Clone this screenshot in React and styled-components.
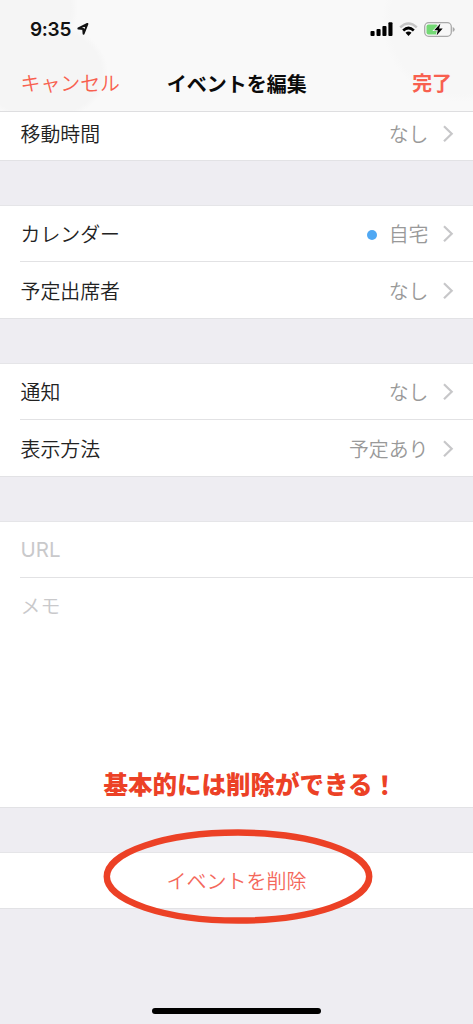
import React from 'react';
import styled, { createGlobalStyle } from 'styled-components';

const Global = createGlobalStyle`
  * { box-sizing: border-box; }
  body { margin: 0; background: #eeedf2; }
`;

const Screen = styled.main`
  position: relative;
  width: 473px;
  height: 1024px;
  overflow: hidden;
  display: flex;
  flex-direction: column;
  background: #eeedf2;
  color: #222;
  font-family: Inter, 'Noto Sans CJK JP', sans-serif;
  font-size: 19.9px;
  font-weight: 350;
  line-height: 28px;
  white-space: nowrap;
`;

const Header = styled.header`
  height: 112px;
  flex: none;
  background:
    radial-gradient(ellipse 66px 50px at 42px 72px, #f5f5f5 90%, transparent 100%),
    radial-gradient(ellipse 72px 60px at 6px 8px, #f5f5f5 90%, transparent 100%),
    radial-gradient(ellipse 80px 80px at 462px 22px, #f7f7f7 90%, transparent 100%),
    #f9f9f9;
  border-bottom: 1px solid #dedee0;
`;

const StatusBar = styled.div`
  display: flex;
  align-items: center;
  height: 56px;
  padding: 2px 18px 0 30px;
`;

const Clock = styled.span`
  width: 42px;
  padding-top: 1px;
  color: #111;
  font-size: 19px;
  font-weight: 600;
  letter-spacing: -0.3px;
`;

const LocationIcon = styled.svg`
  margin-left: 4px;
`;

const StatusIcons = styled.div`
  display: flex;
  align-items: center;
  gap: 6px;
  margin-left: auto;
`;

const NavBar = styled.nav`
  display: grid;
  grid-template-columns: 1fr auto 1fr;
  align-items: center;
  height: 55px;
  padding: 1px 21px 0 20.5px;
`;

const NavAction = styled.span`
  color: #f8604f;
  font-weight: ${(p) => (p.$strong ? 700 : 350)};
  text-align: ${(p) => (p.$strong ? 'right' : 'left')};
`;

const Title = styled.h1`
  margin: 0;
  padding: 1px 0 0 1px;
  color: #0b0b0b;
  font-size: 20px;
  line-height: 28px;
  font-weight: 700;
`;

const Group = styled.section`
  flex: none;
  margin-bottom: 44px;
  background: #fff;
  border-top: ${(p) => (p.$joined ? '0' : '1px solid #e5e5e8')};
  border-bottom: 1px solid #e2e2e5;
`;

const Row = styled.div`
  display: flex;
  align-items: center;
  height: ${(p) => p.$height || 56}px;
  margin-left: 20px;
  padding: ${(p) => p.$drop || 0}px 19.5px ${(p) => p.$lift || 0}px 0.5px;
  border-bottom: ${(p) => (p.$divided ? '1px solid #e2e2e4' : '0')};
`;

const Label = styled.span`
  padding-top: 2px;
`;

const Value = styled.span`
  display: flex;
  align-items: center;
  margin-left: auto;
  margin-right: 13px;
  padding-top: 2px;
  color: #999;
`;

const CalendarDot = styled.i`
  width: 10px;
  height: 10px;
  margin-right: 11.5px;
  border-radius: 50%;
  background: #50a8f3;
`;

const Placeholder = styled.span`
  color: #c9c9cb;
`;

const UrlPlaceholder = styled(Placeholder)`
  font-size: 20.5px;
  font-weight: 400;
`;

const NotesArea = styled.div`
  display: flex;
  flex-direction: column;
  height: 229px;
  padding: 15px 20px 7px 20.5px;
`;

const Caption = styled.strong`
  margin: auto 0 0 83px;
  color: #ec4126;
  font-size: 24.5px;
  line-height: 30px;
  font-weight: 900;
`;

const DeleteButton = styled.button`
  display: block;
  width: 100%;
  height: 55px;
  padding: 2px 0 0;
  border: 0;
  background: transparent;
  color: #f4685b;
  font: inherit;
  font-size: 20px;
`;

const HandDrawnRing = styled.svg`
  position: absolute;
  left: 100px;
  top: 826px;
  pointer-events: none;
`;

const HomeIndicator = styled.div`
  width: 169px;
  height: 6px;
  margin: auto auto 10px;
  border-radius: 3px;
  background: #000;
`;

const Chevron = () => (
  <svg width="12" height="18" viewBox="0 0 12 18" fill="none">
    <path d="M2 1.2 9.7 8.7 2 16.2" stroke="#c7c7c9" strokeWidth="2.2" />
  </svg>
);

const Setting = ({ label, value, dot, ...row }) => (
  <Row {...row}>
    <Label>{label}</Label>
    <Value>
      {dot && <CalendarDot />}
      {value}
    </Value>
    <Chevron />
  </Row>
);

export default function App() {
  return (
    <Screen>
      <Global />
      <Header>
        <StatusBar>
          <Clock>9:35</Clock>
          <LocationIcon width="14" height="14" viewBox="0 0 14 14" fill="none">
            <path d="M11.4 2 2.4 6.5l4.8.5.4 4.7Z" stroke="#111" strokeWidth="2" strokeLinejoin="round" />
          </LocationIcon>
          <StatusIcons>
            <svg width="23" height="14" viewBox="0 0 23 14" fill="#000">
              <rect x="0.5" y="9" width="4.1" height="5" rx="1" />
              <rect x="6.5" y="7" width="4.1" height="7" rx="1" />
              <rect x="12.4" y="4" width="4.1" height="10" rx="1" />
              <rect x="18.4" y="0.3" width="4.1" height="13.7" rx="1" />
            </svg>
            <svg width="19" height="14" viewBox="0 0 19 14" fill="none">
              <path d="M1.2 5.3Q9.5-2.4 17.8 5.3" stroke="#c5c5c5" strokeWidth="2.5" />
              <path d="M4.2 8.4Q9.5 3.6 14.8 8.4" stroke="#000" strokeWidth="2.7" />
              <path d="M6.5 10.8Q9.5 8.3 12.5 10.8L9.5 13.9Z" fill="#000" />
            </svg>
            <svg width="31" height="15" viewBox="0 0 31 15">
              <rect x="0.7" y="0.7" width="26.6" height="13.6" rx="4" fill="none" stroke="#a9a9a9" strokeWidth="1.3" />
              <path d="M28.7 5v5q2-.7 2-2.5t-2-2.5Z" fill="#a9a9a9" />
              <rect x="2.5" y="2.5" width="11.5" height="10" rx="2" fill="#74d975" />
              <path d="m16.4 1.5-6.2 6.8h3.6l-1.2 5.2 6.1-6.9h-3.6Z" fill="#000" stroke="#f9f9f9" strokeWidth="1.6" paintOrder="stroke" />
            </svg>
          </StatusIcons>
        </StatusBar>
        <NavBar>
          <NavAction>キャンセル</NavAction>
          <Title>イベントを編集</Title>
          <NavAction $strong>完了</NavAction>
        </NavBar>
      </Header>

      <Group $joined>
        <Setting label="移動時間" value="なし" $height={48} $lift={5} />
      </Group>

      <Group>
        <Setting label="カレンダー" value="自宅" dot $divided />
        <Setting label="予定出席者" value="なし" $drop={1} />
      </Group>

      <Group>
        <Setting label="通知" value="なし" $divided />
        <Setting label="表示方法" value="予定あり" $drop={1} />
      </Group>

      <Group>
        <Row $divided>
          <UrlPlaceholder>URL</UrlPlaceholder>
        </Row>
        <NotesArea>
          <Placeholder>メモ</Placeholder>
          <Caption>基本的には削除ができる！</Caption>
        </NotesArea>
      </Group>

      <Group>
        <DeleteButton>イベントを削除</DeleteButton>
      </Group>

      <HandDrawnRing width="275" height="101" viewBox="0 0 275 101" fill="none">
        <ellipse cx="138" cy="50.6" rx="131.2" ry="44" stroke="#ec4126" strokeWidth="6.5" />
      </HandDrawnRing>
      <HomeIndicator />
    </Screen>
  );
}
